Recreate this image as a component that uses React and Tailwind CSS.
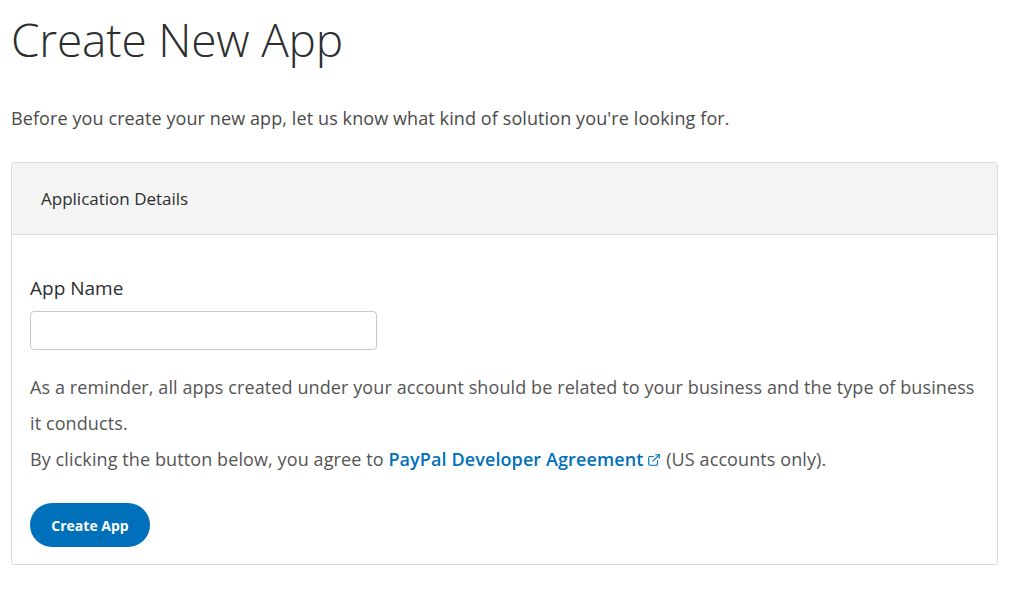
import { FiExternalLink } from 'react-icons/fi';

export default function App() {
  return (
    <div className="min-h-[589px] bg-white text-[#2c2e2f]" style={{ fontFamily: '"Open Sans", "Noto Sans", sans-serif' }}>
      <div className="w-[987px] ml-[11px]">
        <h1 className="pt-[12px] text-[46px] leading-[54px] font-light text-[#2c2e2f] tracking-[-0.2px]">Create New App</h1>
        <p className="mt-[39px] text-[18px] leading-[26px] text-[#4a4a4a] tracking-[0.1px]">
          Before you create your new app, let us know what kind of solution you're looking for.
        </p>
        <div className="mt-[31px] border border-[#dcdcdc] rounded-[3px] h-[403px]">
          <div className="h-[72px] bg-[#f4f4f4] border-b border-[#dcdcdc] flex items-center px-[29px] text-[17px] text-[#2c2e2f]">
            Application Details
          </div>
          <div className="px-[18px]">
            <div className="mt-[40px] text-[19px] leading-[26px] font-medium text-[#2c2e2f]">App Name</div>
            <input className="mt-[10px] w-[347px] h-[39px] border border-[#c9c9c9] rounded-[4px] outline-none" />
            <div className="mt-[19px] text-[18px] leading-[36px] text-[#555] tracking-[0.1px]">
              <p>As a reminder, all apps created under your account should be related to your business and the type of business it conducts.</p>
              <p>
                By clicking the button below, you agree to{' '}
                <a className="text-[#0070ba] font-semibold">PayPal Developer Agreement</a>
                <FiExternalLink className="inline ml-[4px] mb-[3px] text-[#0070ba] w-[14px] h-[14px]" /> (US accounts only).
              </p>
            </div>
            <button className="mt-[26px] w-[120px] h-[44px] rounded-full bg-[#0070ba] text-white text-[14px] font-bold">
              Create App
            </button>
          </div>
        </div>
      </div>
    </div>
  );
}
